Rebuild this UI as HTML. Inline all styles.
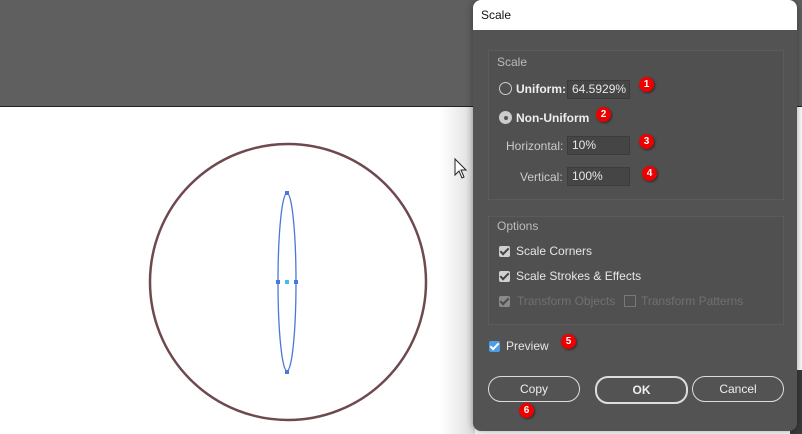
<!DOCTYPE html><html><head><style>
body{margin:0;width:802px;height:434px;overflow:hidden;position:relative;background:#fff;font-family:"Liberation Sans",sans-serif}
.a{position:absolute}
.t{position:absolute;font-size:12px;color:#e6e6e6;white-space:nowrap}
.inp{position:absolute;background:#454545;border:1px solid #3c3c3c;color:#e8e8e8;font-size:12px;line-height:17px;padding-left:4px;box-sizing:border-box;height:19px}
.b{position:absolute;width:15px;height:15px;border-radius:50%;background:#e00;color:#fff;font-size:10px;font-weight:bold;text-align:center;line-height:15px;box-shadow:1px 1px 2px rgba(0,0,0,.5)}
.cb{position:absolute;width:11px;height:11px;background:#d0d0d0;border-radius:2px}
.cb:after{content:"";position:absolute;left:3px;top:0px;width:3px;height:7px;border:solid #444;border-width:0 2px 2px 0;transform:rotate(45deg)}
.btn{position:absolute;height:24px;border:1.5px solid #ddd;border-radius:13px;color:#eee;font-size:12px;text-align:center;line-height:24px}
</style></head><body>
<div class="a" style="left:0;top:0;width:802px;height:106px;background:#5f5f5f"></div>
<div class="a" style="left:0;top:106px;width:802px;height:1px;background:#222"></div>
<div class="a" style="left:440px;top:107px;width:35px;height:327px;background:linear-gradient(90deg,#fff,#ddd)"></div>
<div class="a" style="left:790px;top:370px;width:12px;height:64px;background:#3a3a3a"></div>
<svg class="a" style="left:0;top:0" width="802" height="434">
<circle cx="288" cy="282" r="138" fill="none" stroke="#6e4a4e" stroke-width="2.5"/>
<ellipse cx="287" cy="282" rx="9" ry="89" fill="none" stroke="#4a78d8" stroke-width="1.3"/>
<rect x="285" y="191" width="4" height="4" fill="#4a78d8"/><rect x="285" y="370" width="4" height="4" fill="#4a78d8"/>
<rect x="276" y="280" width="4" height="4" fill="#4a78d8"/><rect x="294" y="280" width="4" height="4" fill="#4a78d8"/>
<rect x="285" y="280" width="4" height="4" fill="#3cc0f0"/>
<path d="M455 159 L455 175 L459 171 L462 178 L464 177 L461 170 L466 170 Z" fill="#fff" stroke="#222" stroke-width="1"/>
</svg>
<div class="a" style="left:473px;top:0;width:324px;height:431px;background:#535353;border-radius:8px;overflow:hidden;box-shadow:0 0 8px rgba(0,0,0,.4)">
<div class="a" style="left:0;top:0;width:324px;height:30px;background:#fff"></div>
<div class="t" style="left:8px;top:8px;color:#111">Scale</div>
</div>
<div class="a" style="left:488px;top:50px;width:294px;height:148px;border:1px solid #5b5b5b;background:#505050"></div>
<div class="t" style="left:497px;top:55px;color:#bbb">Scale</div>
<div class="a" style="left:499px;top:82px;width:11px;height:11px;border:1.5px solid #ccc;border-radius:50%"></div>
<div class="t" style="left:516px;top:82px;font-weight:bold;color:#eee">Uniform:</div>
<div class="inp" style="left:567px;top:80px;width:63px">64.5929%</div>
<div class="b" style="left:639px;top:77px">1</div>
<div class="a" style="left:499px;top:111px;width:11px;height:11px;border:1.5px solid #ccc;border-radius:50%;background:#ccc"><div class="a" style="left:3.5px;top:3.5px;width:4px;height:4px;border-radius:50%;background:#555"></div></div>
<div class="t" style="left:516px;top:111px;font-weight:bold;color:#eee">Non-Uniform</div>
<div class="b" style="left:596px;top:107px">2</div>
<div class="t" style="left:506px;top:139px;color:#ccc">Horizontal:</div>
<div class="inp" style="left:567px;top:136px;width:63px">10%</div>
<div class="b" style="left:639px;top:134px">3</div>
<div class="t" style="left:520px;top:170px;color:#ccc">Vertical:</div>
<div class="inp" style="left:567px;top:167px;width:63px">100%</div>
<div class="b" style="left:642px;top:166px">4</div>
<div class="a" style="left:488px;top:216px;width:294px;height:107px;border:1px solid #5b5b5b;background:#505050"></div>
<div class="t" style="left:497px;top:219px;color:#bbb">Options</div>
<div class="cb" style="left:499px;top:246px"></div><div class="t" style="left:516px;top:244px">Scale Corners</div>
<div class="cb" style="left:499px;top:271px"></div><div class="t" style="left:516px;top:269px">Scale Strokes &amp; Effects</div>
<div class="cb" style="left:499px;top:296px;opacity:.45"></div><div class="t" style="left:517px;top:294px;color:#707070">Transform Objects</div>
<div class="a" style="left:624px;top:295px;width:10px;height:10px;border:1px solid #777"></div><div class="t" style="left:641px;top:294px;color:#707070">Transform Patterns</div>
<div class="cb" style="left:489px;top:341px;background:#4a9ee8"></div>
<div class="a" style="left:489px;top:341px;width:11px;height:11px"><div class="a" style="left:3px;top:0;width:3px;height:7px;border:solid #fff;border-width:0 2px 2px 0;transform:rotate(45deg)"></div></div>
<div class="t" style="left:506px;top:339px">Preview</div>
<div class="b" style="left:561px;top:334px">5</div>
<div class="btn" style="left:488px;top:376px;width:90px">Copy</div>
<div class="btn" style="left:595px;top:376px;width:89px;border-width:2px;font-weight:bold">OK</div>
<div class="btn" style="left:692px;top:376px;width:90px">Cancel</div>
<div class="b" style="left:519px;top:403px">6</div>
</body></html>
